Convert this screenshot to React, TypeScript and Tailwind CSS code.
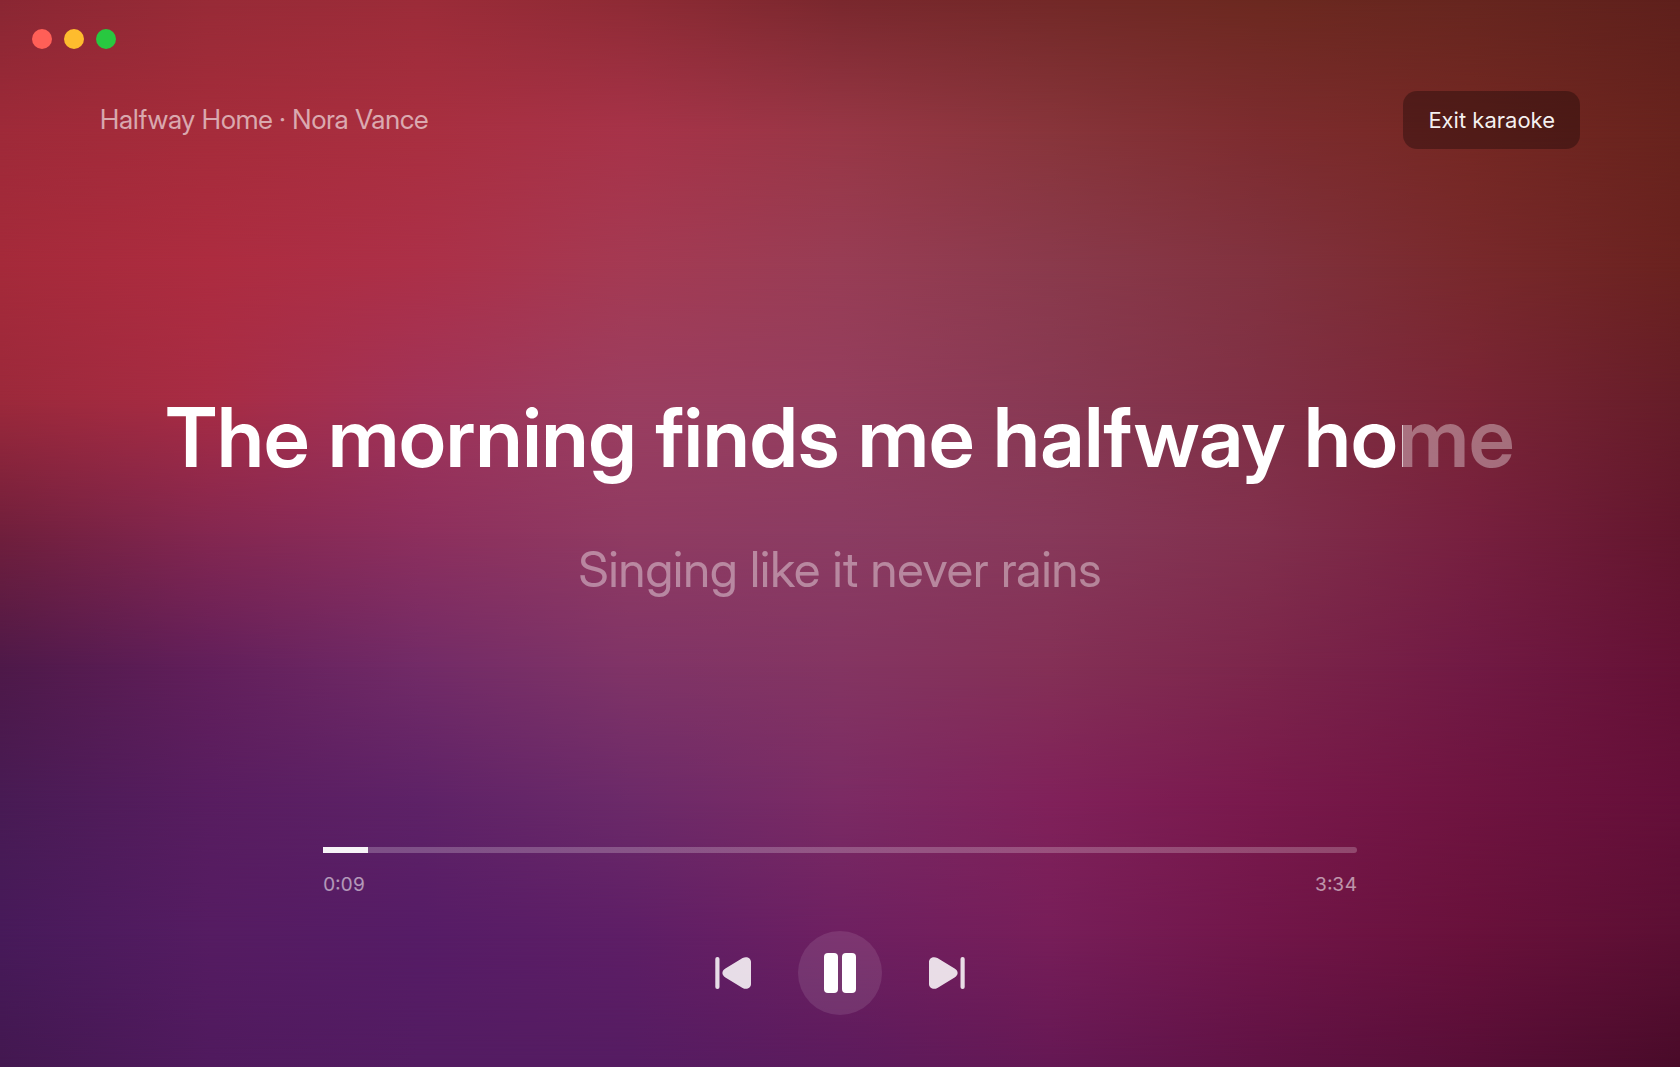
const stops = [0, 12.5, 25, 37.5, 50, 62.5, 75, 87.5, 100];

const mesh = [
  ["#8a2733", "#982b37", "#9c2c39", "#8e2b35", "#7a282e", "#732928", "#6c2920", "#67261f", "#5f201c"],
  ["#9f2a39", "#a62c3b", "#a92f40", "#a73349", "#983746", "#88353b", "#7d2c2f", "#752823", "#68231d"],
  ["#a52a3a", "#ad2c40", "#ac3048", "#a43a53", "#983d55", "#8a3a4c", "#81323f", "#79292c", "#6a221f"],
  ["#9c293b", "#a82c44", "#a13358", "#9b3e60", "#943e5e", "#883953", "#803045", "#7a2536", "#661d28"],
  ["#701f3c", "#842750", "#8d2f5d", "#903b62", "#8b3c62", "#87395a", "#81304d", "#77203f", "#63162d"],
  ["#4e1949", "#621f5b", "#722b67", "#803467", "#843562", "#843056", "#7c264b", "#711a44", "#651135"],
  ["#481b54", "#581d60", "#5e2267", "#6c2a69", "#7b2b64", "#80215a", "#79194c", "#6f1440", "#650f39"],
  ["#471a5a", "#551c62", "#561c66", "#5e1e66", "#6e2061", "#771e59", "#711649", "#69113b", "#5c0f33"],
  ["#431850", "#501a5e", "#531c62", "#551c62", "#5c1b5d", "#651854", "#601244", "#580e37", "#490b29"],
];

function Backdrop() {
  return (
    <div aria-hidden="true" className="absolute inset-0 -z-10 overflow-hidden">
      {mesh.map((row, i) => {
        const mask =
          i === 0
            ? undefined
            : `linear-gradient(to bottom, transparent ${stops[i - 1]}%, black ${stops[i]}%)`;
        return (
          <div
            key={i}
            className="absolute inset-0"
            style={{
              backgroundImage: `linear-gradient(to right, ${row.map((c, j) => `${c} ${stops[j]}%`).join(", ")})`,
              maskImage: mask,
            }}
          />
        );
      })}
    </div>
  );
}

function SkipIcon({ className = "" }: { className?: string }) {
  return (
    <svg viewBox="0 0 36 34" className={`h-[34px] w-9 ${className}`} fill="currentColor" aria-hidden="true">
      <path d="M0 6C0 2.2 4.2-.2 8.4 2L25.6 12.6C29.6 15 29.6 19 25.6 21.4L8.4 32C4.2 34.2 0 31.8 0 28Z" />
      <rect x="31.5" y="1" width="4.2" height="32" rx="2" />
    </svg>
  );
}

function PauseIcon() {
  return (
    <svg viewBox="0 0 32 40" className="h-10 w-8" fill="currentColor" aria-hidden="true">
      <rect x="0" y="0" width="14" height="40" rx="4" />
      <rect x="18" y="0" width="14" height="40" rx="4" />
    </svg>
  );
}

function time(s: number) {
  return `${Math.floor(s / 60)}:${String(Math.floor(s % 60)).padStart(2, "0")}`;
}

export default function App() {
  const elapsed = 9.4;
  const duration = 214;
  const played = (elapsed / duration) * 100;
  const sung = 91.8;

  return (
    <div className="relative isolate flex min-h-screen flex-col font-['Inter',sans-serif] text-white">
      <Backdrop />

      <div className="flex gap-3 px-8 pt-[29px]">
        <button type="button" aria-label="Close" className="size-5 rounded-full bg-[#ff5f57]" />
        <button type="button" aria-label="Minimize" className="size-5 rounded-full bg-[#febc2e]" />
        <button type="button" aria-label="Zoom" className="size-5 rounded-full bg-[#28c840]" />
      </div>

      <header className="mt-[42px] flex items-center justify-between px-[100px]">
        <p className="font-['Inter_Display','Inter',sans-serif] text-[27px] leading-8 text-white/60">
          Halfway Home · Nora Vance
        </p>
        <button type="button" className="rounded-[14px] bg-black/30 px-[25px] py-3 text-[22px] leading-[34px] text-white/95">
          Exit karaoke
        </button>
      </header>

      <main className="flex flex-1 flex-col items-center justify-center gap-[52px] pb-2 text-center font-['Inter_Display','Inter',sans-serif]">
        <h1
          className="bg-clip-text text-[82px] leading-[100px] font-semibold whitespace-nowrap text-transparent"
          style={{
            backgroundImage: `linear-gradient(to right, white ${sung}%, rgb(255 255 255 / 0.35) ${sung}%)`,
          }}
        >
          The morning finds me halfway home
        </h1>
        <p className="text-[49px] leading-[60px] text-white/40">Singing like it never rains</p>
      </main>

      <footer className="flex flex-col items-center pb-[52px]">
        <div className="w-[1034px] max-w-full">
          <input
            type="range"
            aria-label="Playback position"
            min={0}
            max={duration}
            step="any"
            defaultValue={elapsed}
            className="block h-1.5 w-full appearance-none rounded-r-full [&::-webkit-slider-thumb]:size-0 [&::-webkit-slider-thumb]:appearance-none"
            style={{
              backgroundImage: `linear-gradient(to right, rgb(255 255 255 / 0.95) ${played}%, rgb(255 255 255 / 0.22) ${played}%)`,
            }}
          />
          <div className="mt-5 flex justify-between text-[19px] leading-6 text-white/55 tabular-nums">
            <span>{time(elapsed)}</span>
            <span>{time(duration)}</span>
          </div>
        </div>
        <div className="mt-[34px] flex items-center gap-[47px]">
          <button type="button" aria-label="Previous track" className="text-white/85">
            <SkipIcon className="rotate-180" />
          </button>
          <button
            type="button"
            aria-label="Pause"
            className="flex size-[84px] items-center justify-center rounded-full bg-white/10"
          >
            <PauseIcon />
          </button>
          <button type="button" aria-label="Next track" className="text-white/85">
            <SkipIcon />
          </button>
        </div>
      </footer>
    </div>
  );
}
